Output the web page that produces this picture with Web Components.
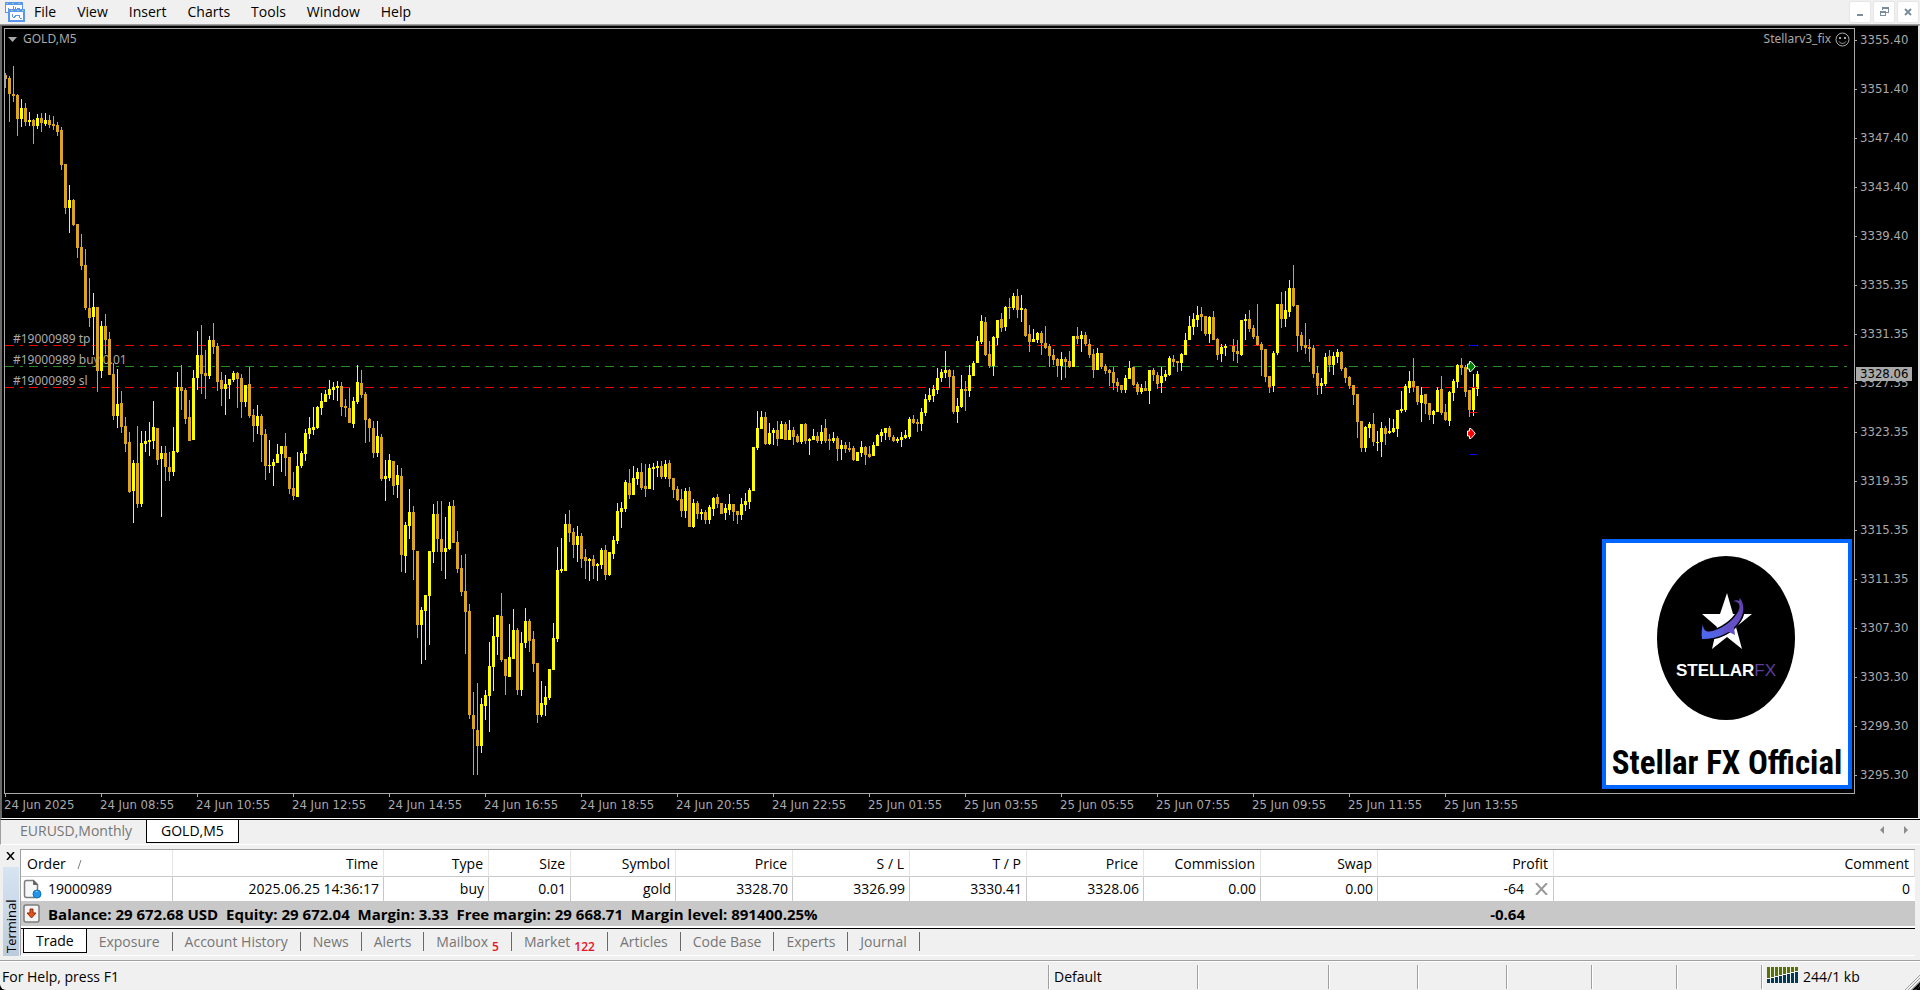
<!DOCTYPE html>
<html lang="en">
<head>
<meta charset="utf-8">
<title>GOLD,M5</title>
<style>
  html, body { height: 100%; }
  body {
    margin: 0; display: flex; flex-direction: column; overflow: hidden;
    background: #000; color: #000;
    font: 14px/20px "Open Sans", "Noto Sans", sans-serif;
  }
  mt-chart { flex: 1; min-height: 0; }
</style>
</head>
<body>
<mt-menu-bar></mt-menu-bar>
<mt-chart symbol="GOLD,M5" expert="Stellarv3_fix">
  <mt-brand-card slot="overlay">Stellar FX Official</mt-brand-card>
</mt-chart>
<mt-chart-tabs></mt-chart-tabs>
<mt-terminal></mt-terminal>
<mt-status-bar>For Help, press F1</mt-status-bar>

<script>
class MtMenuBar extends HTMLElement {
  constructor() {
    super();
    this.attachShadow({ mode: 'open' });
    const items = ['File', 'View', 'Insert', 'Charts', 'Tools', 'Window', 'Help'];
    this.shadowRoot.innerHTML = `
      <style>
        :host {
          display: flex; align-items: center; justify-content: space-between;
          height: 24px; background: #f0f0f0;
          border-bottom: 1px solid #a0a0a0;
        }
        nav, .window { display: flex; align-items: center; }
        nav { padding-left: 4px; }
        nav svg { margin-right: -2px; }
        button { font: inherit; color: inherit; background: none; border: 0; margin: 0; }
        nav button { padding: 0 11px 0 10px; }
        .window { gap: 2px; padding-right: 1px; }
        .window button {
          display: flex; align-items: center; justify-content: center;
          width: 22px; height: 22px; padding: 0;
          background: #fff; border: 1px solid #e6e6e6; border-radius: 2px;
        }
      </style>
      <nav>
        <svg width="22" height="22" viewBox="0 0 22 22" fill="none" shape-rendering="crispEdges">
          <path d="M1 1h17v10H1z" fill="#fff" stroke="#5b96f0" stroke-width="1"/>
          <path d="M1 1h17v3H1z" fill="#5b96f0"/>
          <path d="M4 9V7M6 8h2M9 9V5M11 8V6M13 7h3" stroke="#5b96f0"/>
          <path d="M5 9h15v11H5z" fill="#fff" stroke="#5b96f0" stroke-width="2"/>
          <path d="M4 8h17v3H4z" fill="#5b96f0"/>
          <path d="M8 13v2l2 2 2-3 3 0 1 3 2 1" stroke="#5b96f0"/>
          <path d="M2 2h2M8 2h2M14 2h2M7 9h2M13 9h2M18 9h2" stroke="#8fd0a0"/>
        </svg>
        ${items.map(t => `<button type="button">${t}</button>`).join('')}
      </nav>
      <div class="window">
        <button type="button" aria-label="Minimize"><svg width="12" height="12"><path d="M3 8h6v2H3z" fill="#7b8c9c"/></svg></button>
        <button type="button" aria-label="Restore"><svg width="12" height="12" fill="none" stroke="#7b8c9c" shape-rendering="crispEdges"><path d="M4 4V1h6v5H8"/><path d="M4 2h7" stroke-width="2"/><path d="M2 5h5v4H2z"/><path d="M2 6h6"/></svg></button>
        <button type="button" aria-label="Close"><svg width="12" height="12"><path d="M3 3l6 6M9 3L3 9" stroke="#7b8c9c" stroke-width="2"/></svg></button>
      </div>
    `;
  }
}
customElements.define('mt-menu-bar', MtMenuBar);

// One bar per 4px step, rows from the top of the window: high, body top, body bottom, low.
// "u" closes up, "d" closes down, "-" is a missing bar.
const BARS = `
73 75 79 88 d,76 78 94 122 d,66 94 96 102 d,94 95 119 136 d,99 108 119 127 u,103 108 122 126 d,112 120 122 126 u,119 120 126 144 d,114 118 126 129 u,113 118 123 132 d,
113 120 124 126 u,115 120 125 128 d,116 124 126 130 d,122 125 132 136 d,127 130 165 170 d,164 164 208 214 d,185 200 208 233 u,199 200 225 226 d,224 224 248 258 d,234 247 266 270 d,
249 265 308 310 d,278 308 318 327 d,293 307 317 355 u,307 307 371 392 d,321 326 371 378 u,314 326 340 354 d,332 339 375 375 d,363 374 416 420 d,369 404 416 428 u,391 403 427 433 d,
417 426 444 452 d,432 442 492 493 d,460 463 491 523 u,426 463 504 508 d,431 443 504 507 u,431 441 444 452 u,422 440 442 456 u,401 427 441 449 u,428 428 460 465 d,446 453 459 517 u,
446 453 467 481 d,452 467 472 481 d,427 451 472 476 u,372 387 452 453 u,365 387 391 410 d,388 390 419 424 d,400 417 441 441 d,370 378 440 440 u,331 355 378 390 u,325 355 374 394 d,
350 373 376 399 d,336 340 376 379 u,323 340 347 354 d,343 346 382 391 d,372 380 389 406 d,375 384 389 415 u,379 379 385 399 u,371 373 380 382 u,372 373 379 408 d,374 378 402 418 d,
385 385 402 407 u,367 384 416 418 d,409 415 426 442 d,405 416 426 434 u,414 416 435 462 d,429 434 466 480 d,440 465 466 473 u,459 462 466 486 u,444 454 463 463 u,446 446 454 472 u,
433 446 458 476 d,457 457 489 494 d,472 488 496 500 d,452 466 497 497 u,451 453 466 468 u,429 433 454 461 u,417 428 434 439 u,407 427 430 435 u,406 407 428 429 u,393 401 408 415 u,
390 394 402 402 u,380 389 395 399 u,382 387 390 400 u,381 386 388 401 u,382 386 407 416 d,399 406 408 417 d,388 408 423 423 d,397 401 424 428 u,365 382 402 404 u,370 383 395 398 d,
392 394 420 443 d,418 419 428 442 d,421 428 453 458 d,421 436 453 457 u,434 437 479 481 d,460 476 479 501 u,454 460 478 481 u,461 461 486 495 d,465 475 485 498 u,468 476 555 572 d,
522 525 556 573 u,489 512 526 539 u,506 512 550 580 d,551 551 625 638 d,607 610 625 664 u,595 595 611 660 u,551 551 596 645 u,504 514 552 563 u,501 514 539 552 d,501 539 552 571 d,
517 548 552 579 u,502 506 549 550 u,500 506 543 543 d,531 542 569 573 d,555 568 592 596 d,554 591 612 654 d,604 611 715 719 d,692 715 729 775 d,683 730 746 775 d,698 704 746 753 u,
690 695 706 720 u,642 666 696 732 u,617 636 667 691 u,615 615 637 655 u,593 616 660 662 d,659 659 676 695 d,624 657 677 677 u,609 630 659 659 u,628 630 690 695 d,632 643 690 696 u,
608 621 643 648 u,619 621 641 652 d,631 639 664 672 d,663 663 715 723 d,681 703 715 717 u,686 697 705 716 u,669 669 698 700 u,623 638 670 670 u,547 570 639 642 u,538 569 571 573 u,
514 524 571 571 u,510 524 533 542 d,528 532 545 558 d,526 536 545 562 u,533 536 559 568 d,549 557 561 579 d,558 559 561 581 u,555 559 566 579 d,563 564 566 581 u,548 550 565 569 u,
545 550 575 580 d,552 552 575 576 u,536 540 554 559 u,503 511 541 544 u,502 508 512 528 u,480 482 509 512 u,469 483 495 499 d,466 478 495 495 u,468 472 479 485 u,463 472 488 490 d,
464 486 489 497 d,464 468 489 489 u,463 467 469 490 u,461 466 468 477 u,461 466 477 479 d,460 464 477 479 u,460 463 479 487 d,478 478 490 498 d,486 489 500 501 d,489 499 511 517 d,
488 491 511 518 u,487 491 527 527 d,499 503 527 528 u,501 503 514 519 d,509 512 514 520 u,510 512 520 524 d,505 507 520 524 u,497 498 509 516 u,494 497 504 508 d,503 503 514 514 d,
504 508 513 520 u,494 504 510 515 u,504 504 512 521 d,511 511 515 524 d,498 504 515 520 u,493 501 505 511 u,488 490 502 509 u,447 447 491 491 u,411 428 448 450 u,411 417 429 429 u,
412 417 444 445 d,423 433 444 445 u,428 430 433 445 u,421 430 439 446 d,421 424 439 439 u,422 424 440 440 d,420 430 440 440 u,427 430 437 445 d,434 436 442 443 d,424 424 442 444 u,
423 424 441 444 d,438 439 441 455 u,429 436 440 440 u,432 436 441 443 d,425 432 441 444 u,419 428 441 443 d,434 439 441 450 d,432 438 441 443 u,436 438 449 461 d,440 445 449 460 u,
442 445 449 453 d,442 448 450 452 d,446 448 460 461 d,452 452 461 461 u,441 447 453 457 u,446 447 455 465 d,446 454 457 458 d,442 445 456 456 u,434 435 446 446 u,429 432 436 442 u,
428 428 433 440 u,426 428 437 440 d,435 437 441 442 d,437 439 441 443 u,432 437 440 447 u,430 435 438 439 u,417 419 437 439 u,415 419 423 424 d,419 422 424 432 d,408 412 424 431 u,
394 399 413 416 u,388 395 400 402 u,385 389 396 402 u,368 378 390 394 u,369 372 378 382 u,351 370 373 378 u,369 370 377 388 d,370 376 412 414 d,398 406 412 423 u,375 389 407 408 u,
381 389 391 411 d,365 375 391 397 u,361 363 376 376 u,336 341 363 363 u,315 321 342 344 u,317 322 355 356 d,341 354 366 368 d,336 337 366 376 u,320 320 338 345 u,313 319 328 332 d,
306 307 327 331 u,298 307 308 319 d,293 296 308 310 u,289 296 310 318 d,295 308 310 322 u,308 309 336 337 d,325 334 342 352 d,329 339 342 342 u,332 333 340 343 u,331 333 343 355 d,
326 343 348 349 d,344 346 356 367 d,349 355 360 365 d,358 359 366 377 d,352 359 366 380 u,357 359 362 378 d,351 361 367 368 d,336 336 367 367 u,327 336 339 344 d,331 335 339 352 u,
332 335 344 346 d,339 344 355 358 d,349 354 370 378 d,348 353 370 370 u,353 353 367 369 d,364 366 371 374 d,369 370 373 386 d,367 372 383 390 d,378 382 386 392 d,385 385 390 393 d,
375 378 390 393 u,361 368 379 379 u,367 367 385 386 d,382 384 392 395 d,384 388 392 394 u,381 388 391 391 d,370 370 391 404 u,368 370 375 381 d,372 375 384 389 d,367 376 383 393 u,
370 374 377 381 u,356 358 375 376 u,355 359 362 367 d,361 361 363 372 d,353 354 363 371 u,333 340 355 355 u,316 326 340 340 u,313 319 327 335 u,306 315 320 327 u,307 314 317 331 d,
316 316 334 336 d,316 317 334 343 u,311 317 340 340 d,338 339 355 360 d,344 347 354 362 u,344 346 348 356 u,-,339 346 352 361 d,340 351 354 363 d,320 320 355 356 u,
314 319 321 340 u,310 319 329 332 d,325 328 337 339 d,304 336 345 346 d,342 344 350 376 d,349 349 377 382 d,376 376 387 393 d,351 353 386 392 u,304 304 353 355 u,292 304 319 328 d,
291 310 319 327 u,280 288 312 317 u,265 288 306 307 d,305 305 336 352 d,332 335 346 350 d,323 345 348 354 d,339 347 349 362 d,345 348 374 378 d,366 373 386 395 d,378 383 386 394 u,
353 357 384 386 u,350 356 365 372 d,352 356 365 375 u,349 352 357 363 u,351 352 369 371 d,367 368 378 383 d,376 377 386 389 d,385 385 395 405 d,394 394 422 438 d,421 421 448 452 d,
426 427 448 452 u,422 424 428 438 u,413 424 442 446 d,431 442 443 451 u,422 428 442 457 u,426 428 434 445 d,418 431 433 434 u,419 428 432 433 u,410 410 429 437 u,391 409 411 413 u,
384 386 410 412 u,371 381 388 393 u,358 381 387 392 d,386 386 402 405 d,387 395 403 422 u,394 394 404 414 d,403 403 415 420 d,410 411 415 424 u,387 390 412 412 u,376 389 413 415 d,
404 412 420 421 d,391 392 421 426 u,379 381 393 401 u,364 365 382 388 u,358 365 368 375 d,365 367 392 397 d,390 390 410 417 d,374 388 410 416 u,371 374 389 396 u`;

const PRICES = ['3355.40', '3351.40', '3347.40', '3343.40', '3339.40', '3335.35', '3331.35', '3327.35',
  '3323.35', '3319.35', '3315.35', '3311.35', '3307.30', '3303.30', '3299.30', '3295.30'];

const TIMES = ['24 Jun 2025', '24 Jun 08:55', '24 Jun 10:55', '24 Jun 12:55', '24 Jun 14:55', '24 Jun 16:55',
  '24 Jun 18:55', '24 Jun 20:55', '24 Jun 22:55', '25 Jun 01:55', '25 Jun 03:55', '25 Jun 05:55',
  '25 Jun 07:55', '25 Jun 09:55', '25 Jun 11:55', '25 Jun 13:55'];

const LEVELS = [
  { y: 345, text: '#19000989 tp', color: '#f00' },
  { y: 366, text: '#19000989 buy 0.01', color: '#228b22' },
  { y: 387, text: '#19000989 sl', color: '#f00' }
];

class MtChart extends HTMLElement {
  constructor() {
    super();
    this.attachShadow({ mode: 'open' });
  }

  connectedCallback() {
    this.shadowRoot.innerHTML = `
      <style>
        :host {
          display: grid; grid-template: minmax(0, 1fr) 24px / minmax(0, 1fr) 63px;
          box-sizing: border-box; padding: 2px 0 0 2px;
          background: #000; color: #a9a9a9;
          border: solid #696969; border-width: 1px 2px 1px 2px; border-right-color: #e3e3e3; border-bottom-color: #fff;
          font: 13px/20px "DejaVu Sans Condensed", "Noto Sans", sans-serif;
        }
        .plot {
          position: relative; border: 1px solid #a9a9a9; overflow: hidden;
          font: 12px/20px "Noto Sans", sans-serif;
        }
        .plot > svg { display: block; width: 100%; height: 100%; }
        .title, .expert { position: absolute; top: 0; display: flex; align-items: center; gap: 4px; }
        .title { left: 3px; gap: 6px; }
        .expert { right: 4px; }
        ::slotted([slot=overlay]) { position: absolute; right: 2px; bottom: 4px; }
        .prices {
          position: relative; display: flex; flex-direction: column; justify-content: space-between;
          padding: 2px 0 9px;
        }
        .prices span { display: flex; align-items: center; gap: 3px; }
        .prices span::before { content: ''; width: 2px; height: 1px; background: #a9a9a9; }
        .prices .last {
          position: absolute; top: 339px; left: 1px; width: 56px; height: 14px; line-height: 14px;
          box-sizing: border-box; padding-left: 4px; background: #a9a9a9; color: #000;
        }
        .prices .last::before { content: none; }
        .times { display: flex; overflow: hidden; }
        .times span { position: relative; flex: none; width: 96px; padding-top: 1px; }
        .times span::before {
          content: ''; position: absolute; left: 1px; top: 0; width: 1px; height: 3px; background: #a9a9a9;
        }
      </style>
      <div class="plot">
        <svg aria-label="${this.getAttribute('symbol')}"><g transform="translate(-5 -29)">${this._levels()}${this._bars()}${this._marks()}</g></svg>
        <div class="title">
          <svg width="9" height="5"><path d="M0 0h9L4.500 5z" fill="#a9a9a9"/></svg>
          <span>${this.getAttribute('symbol')}</span>
        </div>
        <div class="expert">
          <span>${this.getAttribute('expert')}</span>
          <svg width="15" height="15" fill="none" stroke="#a9a9a9">
            <circle cx="7.500" cy="7.500" r="6.500"/>
            <path d="M5 5v2M10 5v2" stroke-width="2"/>
            <path d="M4 9.500c1.500 2.500 5.500 2.500 7 0"/>
          </svg>
        </div>
        <slot name="overlay"></slot>
      </div>
      <div class="prices">
        ${PRICES.map(p => `<span>${p}</span>`).join('')}
        <span class="last">3328.06</span>
      </div>
      <div class="times">${TIMES.map(t => `<span>${t}</span>`).join('')}</div>
    `;
  }

  _levels() {
    return LEVELS.map(l => `
      <line x1="5" x2="100%" y1="${l.y}" y2="${l.y}" transform="translate(0 .5)" stroke="${l.color}" stroke-dasharray="9 6 3 6"/>
      <text x="13" y="${l.y - 2}" fill="#a9a9a9">${l.text}</text>`).join('');
  }

  _bars() {
    const paths = { u: '', d: '' };
    BARS.trim().split(/,\s*/).forEach((bar, i) => {
      if (bar === '-') return;
      const [high, top, bottom, low, dir] = bar.split(' ');
      const x = 5 + i * 4;
      paths[dir] += `M${x} ${high}h1V${low}h-1zM${x - 1} ${top}h3V${bottom}h-3z`;
    });
    return `<g shape-rendering="crispEdges"><path d="${paths.d}" fill="#daa520"/><path d="${paths.u}" fill="#ff0"/></g>`;
  }

  _marks() {
    const arrow = (y, fill) => `<path d="M1467.500 ${y - 2}h2v-2.500h1.500l4 4.500v1l-4 4.500h-1.500v-2.500h-2z" fill="${fill}" stroke="#fff"/>`;
    return `
      <path d="M1470 345h7v1h-7zM1470 454h7v1h-7z" fill="#00f"/>
      <path d="M1470 387h7v1h-7zM1470 412h7v1h-7z" fill="#f00"/>
      ${arrow(366, '#008000')}${arrow(433, '#f00')}`;
  }
}
customElements.define('mt-chart', MtChart);

class MtBrandCard extends HTMLElement {
  constructor() {
    super();
    this.attachShadow({ mode: 'open' });
    this.shadowRoot.innerHTML = `
      <style>
        :host {
          display: flex; flex-direction: column; align-items: center; box-sizing: border-box;
          width: 250px; height: 250px; padding-top: 12px;
          background: #fff; border: 4px solid #06f; color: #000;
        }
        .name {
          margin-top: 22px; white-space: nowrap;
          font: bold 33px/40px "Liberation Sans Narrow", "Roboto Condensed", Roboto, sans-serif;
        }
      </style>
      <svg width="140" height="166" viewBox="0 0 140 166">
        <defs>
          <linearGradient id="sweep" x1="0" y1="1" x2="1" y2="0">
            <stop offset="0" stop-color="#4a6cf0"/><stop offset=".6" stop-color="#6650c8"/><stop offset="1" stop-color="#6040a8"/>
          </linearGradient>
        </defs>
        <ellipse cx="69" cy="83" rx="69" ry="82"/>
        <path d="M70 38l6 21h19l-16 13 6 22-15-12-15 12 5-22-15-13h18z" fill="#fff"/>
        <path d="M46 69c0 5 2 8 7 7.500C64 75 76 66 81 57c3-6 2-10-5-11 3-1 5-1 6 0l1-3c5 7 4 15 0 22-7 12-21 19-38 19-1-6 0-11 1-15z"
          fill="url(#sweep)" stroke="#000" stroke-width="3" paint-order="stroke"/>
        <path d="M76 67l1 5 1 8-6-3-7 2 3-7z" fill="#6650c8"/>
        <text x="69" y="121" text-anchor="middle" fill="#fff" font-family="Liberation Sans" font-weight="bold" font-size="17">STELLAR<tspan fill="#5b3f9e" font-weight="normal">FX</tspan></text>
      </svg>
      <span class="name"><slot></slot></span>
    `;
  }
}
customElements.define('mt-brand-card', MtBrandCard);

class MtChartTabs extends HTMLElement {
  constructor() {
    super();
    this.attachShadow({ mode: 'open' });
    this.shadowRoot.innerHTML = `
      <style>
        :host {
          display: flex; justify-content: space-between; height: 24px;
          background: #f0f0f0; border-top: 1px solid #000; border-bottom: 1px solid #fff;
          border-left: 1px solid #a0a0a0;
        }
        .tabs, .scroll { display: flex; align-items: center; }
        button {
          font: inherit; line-height: 22px; background: none; border: 0; padding: 0; color: #767676;
        }
        .tabs { padding-left: 5px; align-items: flex-start; }
        .tabs button { padding: 0 14px; }
        .tabs .active {
          background: #fff; color: #000; padding: 0 14px;
          border: solid #000; border-width: 0 1px 1px;
        }
        .scroll { gap: 20px; padding: 0 12px; height: 20px; }
        .scroll button { display: flex; }
      </style>
      <div class="tabs">
        <button type="button">EURUSD,Monthly</button>
        <button type="button" class="active">GOLD,M5</button>
      </div>
      <div class="scroll">
        <button type="button" aria-label="Previous"><svg width="4" height="8"><path d="M4 0v8L0 4z" fill="#8c8c8c"/></svg></button>
        <button type="button" aria-label="Next"><svg width="4" height="8"><path d="M0 0v8l4-4z" fill="#8c8c8c"/></svg></button>
      </div>
    `;
  }
}
customElements.define('mt-chart-tabs', MtChartTabs);

class MtTerminal extends HTMLElement {
  constructor() {
    super();
    this.attachShadow({ mode: 'open' });
    const columns = [['Type', 105, 'buy'], ['Size', 82, '0.01'], ['Symbol', 105, 'gold'], ['Price', 117, '3328.70'],
      ['S / L', 117, '3326.99'], ['T / P', 117, '3330.41'], ['Price', 117, '3328.06'],
      ['Commission', 117, '0.00'], ['Swap', 117, '0.00']];
    const tabs = [['Trade'], ['Exposure'], ['Account History'], ['News'], ['Alerts'], ['Mailbox', 5],
      ['Market', 122], ['Articles'], ['Code Base'], ['Experts'], ['Journal']];
    this.shadowRoot.innerHTML = `
      <style>
        :host { display: flex; background: #f0f0f0; padding: 4px 5px 4px 3px; border-bottom: 1px solid #a0a0a0; }
        button { font: inherit; background: none; border: 0; padding: 0; margin: 0; }
        aside { display: flex; flex-direction: column; width: 16px; margin-right: 1px; }
        aside button { display: flex; padding: 3px 0 7px 3px; }
        aside span {
          flex: 1; writing-mode: vertical-rl; transform: rotate(180deg); font-size: 13px; line-height: 16px;
          padding-top: 3px; background: linear-gradient(#bccbdc, #d7e4f2);
        }
        .panel { flex: 1; min-width: 0; border: solid #a0a0a0; border-width: 1px 0 0 1px; border-bottom: 1px solid #fff; }
        table { width: 100%; table-layout: fixed; border-collapse: separate; border-spacing: 0; background: #fff; }
        th, td { padding: 0 4px 0 0; text-align: right; white-space: nowrap; box-sizing: border-box; }
        th { height: 27px; padding: 2px 5px 0 0; font-weight: normal; border-right: 1px solid #e5e5e5; border-bottom: 1px solid #c8c8c8; }
        td { height: 24px; border-right: 1px solid #c8c8c8; }
        td:last-child { border-right-color: transparent; }
        th:first-child { text-align: left; padding-left: 6px; }
        th svg { margin-left: 8px; }
        td:first-child { text-align: left; }
        .cell { display: flex; align-items: center; gap: 6px; padding-left: 2px; }
        .profit { display: flex; align-items: center; justify-content: flex-end; gap: 11px; padding-right: 1px; }
        .profit button { display: flex; }
        tfoot td { height: 25px; background: #c8c8c8; border: 0; font-size: 15px; font-weight: bold; white-space: pre; }
        tfoot .total { padding-right: 29px; }
        .tabs { display: flex; align-items: flex-start; height: 26px; border-top: 1px solid #000; box-shadow: 0 -2px #fff; margin-top: 2px; padding-left: 2px; }
        .tabs button { height: 19px; line-height: 18px; margin-top: 3px; padding: 0 12px; color: #767676; border-right: 1px solid #696969; }
        .tabs .active {
          height: 24px; line-height: 24px; margin-top: 0; background: #fff; color: #000;
          border: solid #000; border-width: 0 1px 1px;
        }
        sub { font-size: 12px; line-height: 0; vertical-align: -4px; margin-left: 4px; color: #e81123; font-weight: 600; }
      </style>
      <aside>
        <button type="button" aria-label="Close"><svg width="9" height="8"><path d="M1 0l7 8M8 0L1 8" stroke="#000" stroke-width="1.500"/></svg></button>
        <span>Terminal</span>
      </aside>
      <div class="panel">
        <table>
          <colgroup>
            <col style="width: 152px"><col style="width: 211px">
            ${columns.map(c => `<col style="width: ${c[1]}px">`).join('')}
            <col style="width: 176px"><col>
          </colgroup>
          <thead>
            <tr>
              <th>Order <svg width="5" height="9"><path d="M1 9L4 0" stroke="#808080"/></svg></th>
              <th>Time</th>${columns.map(c => `<th>${c[0]}</th>`).join('')}<th>Profit</th><th>Comment</th>
            </tr>
          </thead>
          <tbody>
            <tr>
              <td><div class="cell">
                <svg width="19" height="20" fill="none">
                  <path d="M1.500 3.500q0-2 2-2h7l4 4v11q0 2-2 2h-9q-2 0-2-2z" fill="#f7f7f7" stroke="#7d7d7d" stroke-width="1.500"/>
                  <path d="M10.500 1.500v4h4z" fill="#666" stroke="#666"/>
                  <circle cx="14" cy="15" r="4" fill="#2196e8" stroke="#1273b8"/>
                  <path d="M12 13q2-2 3 0z" fill="#9ad7ff"/>
                </svg>19000989</div></td>
              <td>2025.06.25 14:36:17</td>
              ${columns.map(c => `<td>${c[2]}</td>`).join('')}
              <td><div class="profit">-64<button type="button" aria-label="Close order"><svg width="13" height="12"><path d="M1 0l11 12M12 0L1 12" stroke="#999" stroke-width="2"/></svg></button></div></td>
              <td>0</td>
            </tr>
          </tbody>
          <tfoot>
            <tr>
              <td colspan="11"><div class="cell"><svg width="19" height="19" fill="none">
                <rect x="1" y="1" width="15" height="17" rx="2" fill="#f4f4f4" stroke="#7d7d7d" stroke-width="1.500"/>
                <path d="M7 5h3v4h3l-4.500 5L4 9h3z" fill="#e8501c" stroke="#8c2a0c"/>
              </svg>Balance: 29 672.68 USD  Equity: 29 672.04  Margin: 3.33  Free margin: 29 668.71  Margin level: 891400.25%</div></td>
              <td class="total">-0.64</td><td></td>
            </tr>
          </tfoot>
        </table>
        <div class="tabs">
          ${tabs.map(([t, n], i) => `<button type="button"${i ? '' : ' class="active"'}>${t}${n ? `<sub>${n}</sub>` : ''}</button>`).join('')}
        </div>
      </div>
    `;
  }
}
customElements.define('mt-terminal', MtTerminal);

class MtStatusBar extends HTMLElement {
  constructor() {
    super();
    this.attachShadow({ mode: 'open' });
    const bars = [0, 1, 2, 3, 4, 5, 6, 7].map(i => {
      const cut = 11 - i;
      return `<path d="M${i * 4} 0h3v${cut}h-3z" fill="#5a7300"/><path d="M${i * 4} ${cut + 1}h3V16h-3z" fill="#003c5a"/>`;
    }).join('');
    this.shadowRoot.innerHTML = `
      <style>
        :host {
          position: relative; display: flex; height: 28px; background: #f0f0f0;
          border-top: 1px solid #fff; border-radius: 0 0 6px 6px; overflow: hidden;
        }
        div { display: flex; align-items: center; gap: 5px; box-sizing: border-box; padding: 0 0 0 5px; margin: 3px 0 1px; border-left: 1px solid #a0a0a0; box-shadow: inset 1px 0 #fff; }
        .hint { flex: 1; border: 0; padding-left: 2px; box-shadow: none; }
        .wide { width: 149px; }
        .mid { width: 131px; }
        .cell { width: 89px; }
        .small { width: 85px; }
        .traffic { width: 159px; }
        .traffic svg { margin-bottom: 4px; }
        .grip { position: absolute; right: 0; bottom: 0; }
      </style>
      <div class="hint"><slot></slot></div>
      <div class="wide">Default</div>
      <div class="mid"></div>
      <div class="cell"></div><div class="cell"></div>
      <div class="small"></div><div class="small"></div><div class="small"></div>
      <div class="traffic"><svg width="31" height="16" shape-rendering="crispEdges">${bars}</svg>244/1 kb</div>
      <svg class="grip" width="15" height="15"><path d="M15 7L7 15h8z" fill="#000"/><path d="M15 0L0 15M15 3L3 15M15 6L6 15" stroke="#a0a0a0"/></svg>
    `;
  }
}
customElements.define('mt-status-bar', MtStatusBar);
</script>
</body>
</html>
